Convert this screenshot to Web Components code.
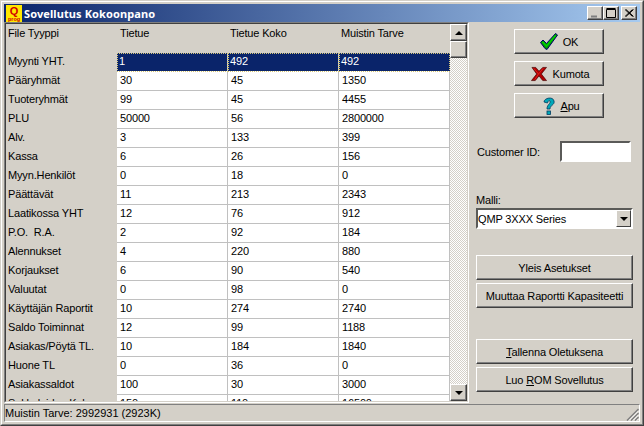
<!DOCTYPE html>
<html><head><meta charset="utf-8">
<style>
html,body{margin:0;padding:0;background:#d4d0c8;font:11px "Liberation Sans",Arial,sans-serif;letter-spacing:-.15px;color:#000}
</style></head><body>
<x-window>
  <x-titlebar slot="title">Sovellutus Kokoonpano</x-titlebar>
  <x-grid slot="grid"></x-grid>
  <x-panel slot="panel">
    <x-button style="width:90px;height:25px;margin:7px 0 0 45px">
      <svg slot="icon" width="18" height="17" viewBox="0 0 18 17"><path d="M0.500 9.500 L3 7 L6.500 10.500 L15.500 0.500 L17.500 2 L7 16.500 L5 15.500Z" fill="#009a00" stroke="#00006a" stroke-width="1"/><path d="M2.500 9 L6.500 13 L15.500 2.500" fill="none" stroke="#00d000" stroke-width="1.400"/></svg>
      OK</x-button>
    <x-button style="width:90px;height:25px;margin:7px 0 0 45px;padding-left:3px">
      <svg slot="icon" width="16" height="16" viewBox="0 0 17 16"><path d="M1 1h4l3.500 4 4-4h4l-5.500 7 5.500 7h-4l-4-5-4 5h-4l5.500-7z" fill="#b00000" stroke="#400000" stroke-width=".7"/><path d="M3 2l5 6 5-6M4 14l4-6" fill="none" stroke="#e02020" stroke-width="1"/></svg>
      Kumota</x-button>
    <x-button style="width:90px;height:25px;margin:7px 0 0 45px;padding-left:5px">
      <svg slot="icon" width="12" height="18" viewBox="0 0 12 18"><path d="M1 5 C1 1 10 -1 11 4 C12 8 7 8 7 12 H4 C4 7 8 7 7 4 C6 3 5 4 4.500 6Z" fill="#00a8b8" stroke="#003a60" stroke-width=".8"/><rect x="4" y="14" width="3.500" height="3.500" fill="#00a8b8" stroke="#003a60" stroke-width=".8"/></svg>
      <span><u>A</u>pu</span></x-button>
    <x-field style="margin:23px 0 0 8px;width:154px" label="Customer ID:"></x-field>
    <x-combo style="margin:30px 0 0 7px" label="Malli:" value="QMP 3XXX Series"></x-combo>
    <x-button style="width:157px;height:25px;margin:26px 0 0 7px">Yleis Asetukset</x-button>
    <x-button style="width:157px;height:25px;margin:3px 0 0 7px">Muuttaa Raportti Kapasiteetti</x-button>
    <x-button style="width:157px;height:25px;margin:31px 0 0 7px"><span><u>T</u>allenna Oletuksena</span></x-button>
    <x-button style="width:157px;height:25px;margin:3px 0 0 7px"><span>Luo <u>R</u>OM Sovellutus</span></x-button>
  </x-panel>
  <x-status slot="status">Muistin Tarve: 2992931 (2923K)</x-status>
</x-window>
<script>
function def(name,html,init){customElements.define(name,class extends HTMLElement{
  constructor(){super();this.attachShadow({mode:'open'}).innerHTML=html;}
  connectedCallback(){if(init)init.call(this,this.shadowRoot);}
});}
const FONT='font:11px "Liberation Sans",Arial,sans-serif;letter-spacing:-.15px;';
def('x-window',`<style>
:host{display:block;width:644px;height:426px;box-sizing:border-box;background:#d4d0c8;${FONT}
 border-style:solid;border-width:1px;border-color:#d4d0c8 #404040 #404040 #d4d0c8}
.in{box-sizing:border-box;height:424px;border-style:solid;border-width:1px;border-color:#fff #808080 #808080 #fff;padding:2px;display:flex;flex-direction:column}
.main{display:flex;height:381px}
</style><div class="in"><slot name="title"></slot><div class="main"><slot name="grid"></slot><slot></slot><slot name="panel"></slot></div><slot name="status"></slot></div>`);
def('x-capbtn',`<style>
:host{display:block;box-sizing:border-box;width:16px;height:14px;background:#d4d0c8;border-style:solid;border-width:1px;border-color:#fff #404040 #404040 #fff;box-shadow:inset -1px -1px 0 #808080}
svg{display:block}
</style><svg width="14" height="12" viewBox="0 0 14 12"><path fill="none" stroke="#000"/></svg>`,function(r){
  const t=this.getAttribute('type'),p=r.querySelector('path');
  if(t==='min'){p.setAttribute('d','M3 9.500H9');p.setAttribute('stroke','#808080');p.setAttribute('stroke-width','2');}
  if(t==='max'){p.setAttribute('d','M2.500 2.500H11.500V10.500H2.500ZM2.500 1.500H11.500');}
  if(t==='close'){p.setAttribute('d','M3 2.500L10.500 9.500M4 2.500L11.500 9.500M10.500 2.500L3 9.500M11.500 2.500L4 9.500');p.setAttribute('stroke-width','1');}
});
def('x-titlebar',`<style>
:host{display:flex;align-items:center;height:18px;background:linear-gradient(90deg,#0a246a,#a6caf0);color:#fff;flex:none;letter-spacing:0}
.ic{margin:0 2px 0 2px;display:block;flex:none}
.t{font:bold 11px "Noto Sans",sans-serif;letter-spacing:.1px;white-space:nowrap;flex:1}
.b{display:flex;margin-right:3px}
x-capbtn:last-child{margin-left:2px}
</style>
<svg class="ic" width="16" height="17" viewBox="0 0 16 17"><rect width="16" height="17" fill="#ffe800"/><text x="8" y="10" text-anchor="middle" font-family="Liberation Sans" font-weight="bold" font-size="11" fill="#d00000">Q</text><text x="8" y="16" text-anchor="middle" font-family="Liberation Sans" font-weight="bold" font-size="5.500" fill="#d00000">prog</text></svg>
<span class="t"><slot></slot></span><div class="b"><x-capbtn type="min"></x-capbtn><x-capbtn type="max"></x-capbtn><x-capbtn type="close"></x-capbtn></div>`);
const rows=[["Myynti YHT.",1,492,492],["Pääryhmät",30,45,1350],["Tuoteryhmät",99,45,4455],["PLU",50000,56,2800000],["Alv.",3,133,399],["Kassa",6,26,156],["Myyn.Henkilöt",0,18,0],["Päättävät",11,213,2343],["Laatikossa YHT",12,76,912],["P.O.  R.A.",2,92,184],["Alennukset",4,220,880],["Korjaukset",6,90,540],["Valuutat",0,98,0],["Käyttäjän Raportit",10,274,2740],["Saldo Toiminnat",12,99,1188],["Asiakas/Pöytä TL.",10,184,1840],["Huone TL",0,36,0],["Asiakassaldot",100,30,3000],["Sekkeleiden Kok",150,110,16500]];
def('x-grid',`<style>
:host{display:block;box-sizing:border-box;width:465px;height:381px;flex:none;border-style:solid;border-width:1px;border-color:#808080 #fff #fff #808080}
.s{box-sizing:border-box;height:379px;border-style:solid;border-width:1px;border-color:#404040 #d4d0c8 #d4d0c8 #404040;display:flex}
.t{width:444px;height:377px;overflow:hidden;background:#d4d0c8}
.r{display:grid;grid-template-columns:111px 111px 111px 111px;height:19px}
.h{height:29px}
.c{box-sizing:border-box;height:19px;line-height:17px;padding-left:2px;white-space:pre;overflow:hidden}
.v{background:#fff;border-right:1px solid #c0c0c0;border-bottom:1px solid #c0c0c0;padding-left:3px}
.h .c{height:18px;line-height:18px;padding-left:2px}
.h .c:nth-child(2){padding-left:3px}
.sel .v{background:#0a246a;color:#fff;border-bottom:1px solid #fff;border-right:1px solid #c9d0e0;height:19px;padding-left:2px}
.sel .v:nth-child(4){border-right:0}
.sel .v{outline:1px dotted #d8c878;outline-offset:-1px}
</style><div class="s"><div class="t"><div class="r h"><div class="c">File Tyyppi</div><div class="c">Tietue</div><div class="c">Tietue Koko</div><div class="c">Muistin Tarve</div></div><div id="b"></div></div><x-scroll></x-scroll></div>`,function(r){
  const b=r.getElementById('b');b.innerHTML='';
  rows.forEach((d,i)=>{const e=document.createElement('div');e.className='r'+(i?'':' sel');
    d.forEach((v,j)=>{const c=document.createElement('div');c.className='c'+(j?' v':'');c.textContent=v;e.appendChild(c)});b.appendChild(e)});
});
def('x-scroll',`<style>
:host{display:flex;flex-direction:column;width:17px;height:377px;flex:none;
 background:repeating-conic-gradient(#fff 0 25%,#d4d0c8 0 50%) 0 0/2px 2px}
.b{box-sizing:border-box;width:17px;height:17px;background:#d4d0c8;border-style:solid;border-width:1px;border-color:#fff #404040 #404040 #fff;box-shadow:inset -1px -1px 0 #808080;display:flex;align-items:center;justify-content:center}
.a{width:0;height:0;border-left:4px solid transparent;border-right:4px solid transparent}
.u{border-bottom:4px solid #000}.d{border-top:4px solid #000}
.sp{flex:1}
</style><div class="b"><div class="a u"></div></div><div class="b"></div><div class="sp"></div><div class="b"><div class="a d"></div></div>`);
def('x-panel',`<style>
:host{display:block;flex:1}
::slotted(*){display:flex}
</style><slot></slot>`);
def('x-button',`<style>
:host{display:flex;box-sizing:border-box;align-items:center;justify-content:center;gap:5px;background:#d4d0c8;color:#000;white-space:nowrap;
 border-style:solid;border-width:1px;border-color:#fff #404040 #404040 #fff;box-shadow:inset -1px -1px 0 #808080;${FONT}}
</style><slot name="icon"></slot><slot></slot>`);
def('x-field',`<style>
:host{display:flex;align-items:center;justify-content:space-between;${FONT}}
.i{box-sizing:border-box;width:71px;height:21px;background:#fff;border-style:solid;border-width:2px;border-color:#5a5a58 #fff #fff #5a5a58}
</style><span id="l"></span><div class="i"></div>`,function(r){r.getElementById('l').textContent=this.getAttribute('label')});
def('x-combo',`<style>
:host{display:flex;flex-direction:column;${FONT}}
#l{height:16px;line-height:16px}
.f{box-sizing:border-box;width:157px;height:21px;background:#fff;border-style:solid;border-width:2px;border-color:#5a5a58 #fff #fff #5a5a58;display:flex;align-items:center;padding-left:0;justify-content:space-between}
.b{box-sizing:border-box;width:15px;height:17px;background:#d4d0c8;border-style:solid;border-width:1px;border-color:#fff #404040 #404040 #fff;display:flex;align-items:center;justify-content:center}
.a{width:0;height:0;border-left:4px solid transparent;border-right:4px solid transparent;border-top:4px solid #000}
</style><span id="l"></span><div class="f"><span id="v"></span><div class="b"><div class="a"></div></div></div>`,function(r){r.getElementById('l').textContent=this.getAttribute('label');r.getElementById('v').textContent=this.getAttribute('value')});
def('x-status',`<style>
:host{display:flex;align-items:center;box-sizing:border-box;height:18px;margin-top:1px;padding-left:0;flex:none;position:relative;border-style:solid;border-width:1px;border-color:#808080 #fff #fff #808080;font:11px "Liberation Sans",Arial,sans-serif;letter-spacing:0}
svg{position:absolute;right:0;bottom:0}
</style><slot></slot><svg width="13" height="13" viewBox="0 0 13 13"><path d="M12.500 1L1 12.500M12.500 5L5 12.500M12.500 9L9 12.500" stroke="#808080" stroke-width="1.500" fill="none"/><path d="M12.500 3L3 12.500M12.500 7L7 12.500M12.500 11L11 12.500" stroke="#fff" fill="none"/></svg>`);
</script>
</body></html>
